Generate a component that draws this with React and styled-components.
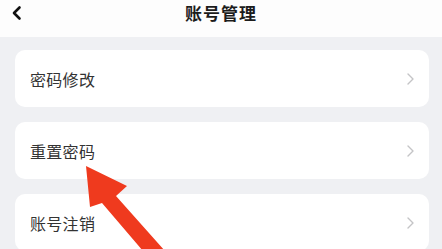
import React from 'react';
import styled, { createGlobalStyle } from 'styled-components';

const GlobalStyle = createGlobalStyle`
  html, body {
    margin: 0;
    padding: 0;
    background: #eff0f3;
    font-family: "Noto Sans CJK SC", "Noto Sans", sans-serif;
  }
`;

const Page = styled.div`
  position: relative;
  width: 442px;
  height: 249px;
  overflow: hidden;
  background: #eff0f3;
`;

const Header = styled.div`
  position: relative;
  height: 37px;
  background: #fdfdfd;
  display: flex;
  align-items: flex-start;
  justify-content: center;
`;

const BackButton = styled.div`
  position: absolute;
  left: 11px;
  top: 5px;
  width: 12px;
  height: 16px;
  display: flex;
`;

const Title = styled.h1`
  margin: 0;
  padding-top: 1px;
  font-size: 17px;
  line-height: 24px;
  font-weight: 700;
  color: #1c1c1c;
  letter-spacing: 1px;
`;

const List = styled.div`
  display: flex;
  flex-direction: column;
  gap: 15px;
  padding: 13px 13px 0 15px;
`;

const Card = styled.div`
  height: 57px;
  background: #ffffff;
  border-radius: 10px;
  display: flex;
  align-items: center;
  justify-content: space-between;
  padding: 0 15px;
`;

const Label = styled.span`
  font-size: 16px;
  color: #333333;
  letter-spacing: 0.3px;
`;

const Chevron = styled.svg`
  width: 7px;
  height: 12px;
  flex: none;
`;

const Pointer = styled.svg`
  position: absolute;
  left: 0;
  top: 0;
  width: 442px;
  height: 249px;
  pointer-events: none;
`;

const items = ['密码修改', '重置密码', '账号注销'];

export default function App() {
  return (
    <Page>
      <GlobalStyle />
      <Header>
        <BackButton>
          <svg width="12" height="16" viewBox="0 0 12 16">
            <path d="M8.5 2.5 L3 8 L8.5 13.5" fill="none" stroke="#111" strokeWidth="2.6" strokeLinecap="round" strokeLinejoin="round" />
          </svg>
        </BackButton>
        <Title>账号管理</Title>
      </Header>
      <List>
        {items.map((item) => (
          <Card key={item}>
            <Label>{item}</Label>
            <Chevron viewBox="0 0 7 12">
              <path d="M1 1 L6 6 L1 11" fill="none" stroke="#c4c4c6" strokeWidth="1.4" strokeLinecap="round" strokeLinejoin="round" />
            </Chevron>
          </Card>
        ))}
      </List>
      <Pointer viewBox="0 0 442 249">
        <polygon
          points="86,166 127,186 116,196 165,251 143,251 102,203 90,207"
          fill="#ef3a1e"
        />
      </Pointer>
    </Page>
  );
}
